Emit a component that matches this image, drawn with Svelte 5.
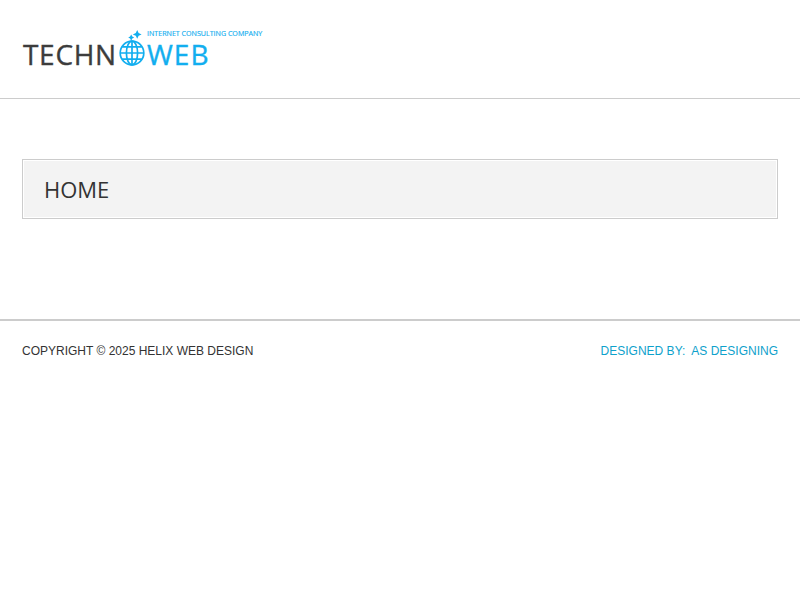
<script>
  const year = 2025;
</script>

<header class="header">
  <div class="logo">
    <div class="tagline-row">
      <svg class="sparkle" width="14" height="11" viewBox="0 0 14 11" aria-hidden="true">
        <path d="M9.2 0 L10.6 3 L13.6 4.4 L10.6 5.8 L9.2 8.8 L7.8 5.8 L4.8 4.4 L7.8 3 Z" fill="#12aeef"/>
        <path d="M3.2 4.4 L4.3 6.4 L6.2 7.5 L4.3 8.6 L3.2 10.8 L2.1 8.6 L0.2 7.5 L2.1 6.4 Z" fill="#12aeef"/>
      </svg>
      <span class="tagline">INTERNET CONSULTING COMPANY</span>
    </div>
    <div class="wordmark">
      <span class="techn">TECHN</span>
      <svg class="globe" width="26" height="26" viewBox="0 0 26 26" fill="none" stroke="#12aeef" stroke-width="1.7" aria-hidden="true">
        <circle cx="13" cy="13" r="11.8"/>
        <ellipse cx="13" cy="13" rx="5.6" ry="11.8"/>
        <path d="M13 1.2 V24.8 M1.2 13 H24.8 M3.2 6.8 H22.8 M3.2 19.2 H22.8"/>
      </svg>
      <span class="web">WEB</span>
    </div>
  </div>
</header>

<main class="main">
  <div class="title-box">
    <h1>HOME</h1>
  </div>
</main>

<footer class="footer">
  <span>COPYRIGHT © {year} HELIX WEB DESIGN</span>
  <span class="credit">DESIGNED BY:&nbsp; AS DESIGNING</span>
</footer>

<style>
  :global(body) {
    margin: 0;
    background: #fff;
  }
  .header {
    height: 68px;
    border-bottom: 1px solid #ccc;
    padding: 30px 0 0 23px;
  }
  .logo {
    width: 245px;
    font-family: "Open Sans", sans-serif;
  }
  .tagline-row {
    display: flex;
    align-items: flex-start;
    height: 11px;
    padding-left: 105px;
  }
  .sparkle {
    flex: none;
    margin-right: 5px;
  }
  .tagline {
    font-size: 7.1px;
    line-height: 7px;
    color: #12aeef;
    -webkit-text-stroke: 0.15px #12aeef;
    white-space: nowrap;
  }
  .wordmark {
    display: flex;
    align-items: center;
    height: 26px;
  }
  .techn, .web {
    font-size: 28px;
    line-height: 26px;
    -webkit-text-stroke: 0.35px currentColor;
  }
  .techn {
    color: #3c3c3c;
    letter-spacing: 0.7px;
    width: 96px;
  }
  .web {
    color: #12aeef;
    letter-spacing: 1px;
    margin-left: 2px;
  }
  .globe {
    flex: none;
    margin-top: -2px;
  }
  .main {
    padding: 60px 22px 100px;
  }
  .title-box {
    height: 58px;
    border: 1px solid #ccc;
    background: #f3f3f3;
    box-shadow: inset 0 0 0 1px #fff;
    display: flex;
    align-items: center;
    padding-left: 21px;
  }
  h1 {
    margin: 0;
    font: 400 22px/30px "Open Sans", sans-serif;
    color: #333;
  }
  .footer {
    border-top: 2px solid #ccc;
    padding: 22px 22px 0;
    display: flex;
    justify-content: space-between;
    font: 12px/17px "Liberation Sans", Arial, sans-serif;
    color: #333;
  }
  .credit {
    color: #0ea1cb;
  }
</style>
